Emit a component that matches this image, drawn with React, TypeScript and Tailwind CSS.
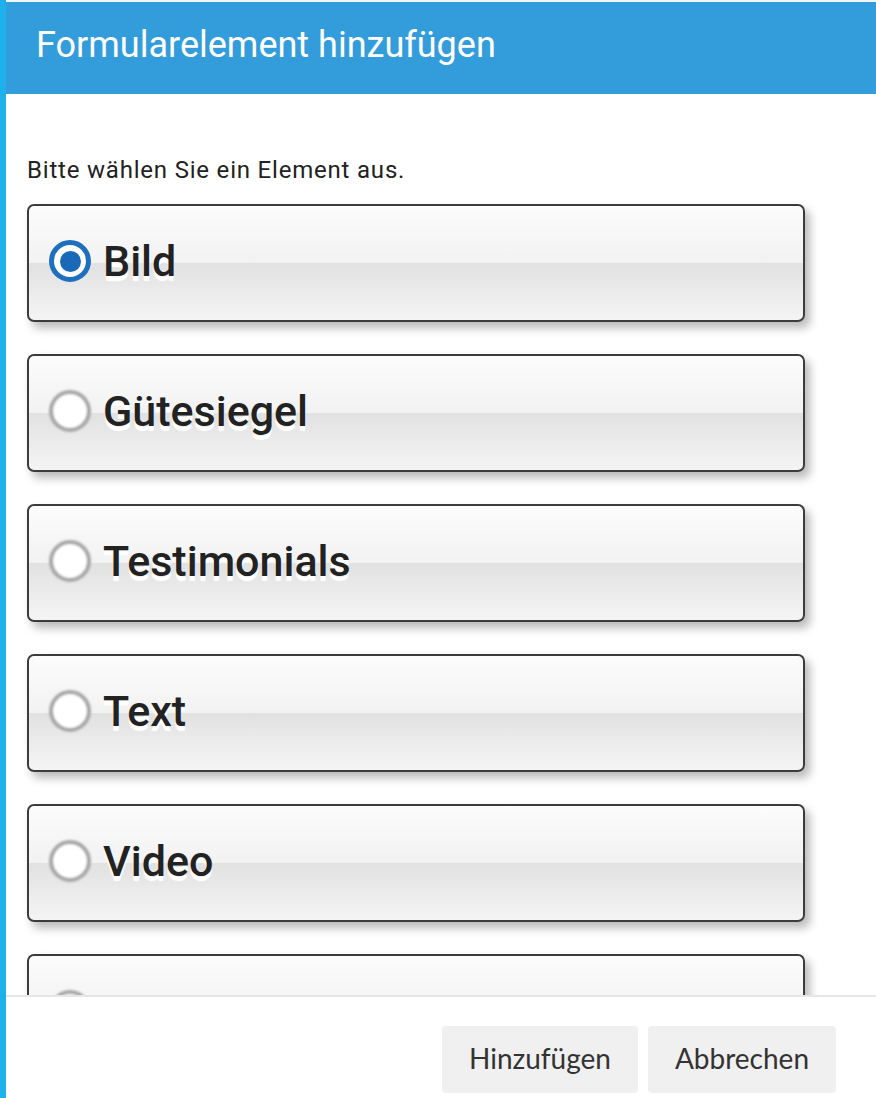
import React from 'react'

const items = [
  { label: 'Bild', checked: true },
  { label: 'Gütesiegel', checked: false },
  { label: 'Testimonials', checked: false },
  { label: 'Text', checked: false },
  { label: 'Video', checked: false },
  { label: '', checked: false },
]

const Radio = ({ checked }: { checked: boolean }) =>
  checked ? (
    <span className="flex h-[42px] w-[42px] shrink-0 items-center justify-center rounded-full border-[5px] border-[#1f6fbf] bg-white blur-[0.4px]">
      <span className="h-[21px] w-[21px] rounded-full bg-[#1a68b8]" />
    </span>
  ) : (
    <span className="h-[42px] w-[42px] shrink-0 rounded-full border-[4px] border-[#a8a8a8] bg-white blur-[0.8px]" />
  )

const Choice = ({ label, checked }: { label: string; checked: boolean }) => (
  <div className="flex h-[118px] shrink-0 items-center gap-[12px] rounded-[7px] border-2 border-[#3c3c3c] bg-[linear-gradient(to_bottom,#fcfcfc_0%,#f2f2f2_50%,#e1e1e1_50%,#ebebeb_75%,#f4f4f4_100%)] pb-[4px] pl-[20px] shadow-[5px_6px_10px_rgba(0,0,0,0.28)]">
    <Radio checked={checked} />
    {label && (
      <span className="font-['Roboto',sans-serif] text-[43px] font-medium leading-none text-[#222] [text-shadow:0_5px_1px_#fff]">
        {label}
      </span>
    )}
  </div>
)

const App = () => {
  return (
    <div className="flex h-[1098px] w-[876px] overflow-hidden bg-white">
      <div className="w-[6px] shrink-0 bg-[#1db0ea]" />

      <div className="flex min-w-0 flex-1 flex-col">
        <div className="h-[2px] shrink-0 bg-[#f2f6f9]" />
        <header className="flex h-[92px] shrink-0 items-center bg-[#339ddb] pb-[6px] pl-[30px]">
          <h1 className="font-['Roboto',sans-serif] text-[36px] font-normal text-white">
            Formularelement hinzufügen
          </h1>
        </header>

        <main className="flex min-h-0 flex-1 flex-col overflow-hidden pl-[21px] pr-[71px]">
          <p className="mt-[61px] mb-[19px] font-['Roboto',sans-serif] text-[24px] leading-[30px] tracking-[0.8px] text-[#222]">
            Bitte wählen Sie ein Element aus.
          </p>
          <div className="flex flex-col gap-[32px]">
            {items.map((it, i) => (
              <Choice key={i} label={it.label} checked={it.checked} />
            ))}
          </div>
        </main>

        <footer className="flex h-[103px] shrink-0 items-start justify-end gap-[10px] border-t-2 border-[#e6e6e6] pt-[29px] pr-[40px]">
          <button className="h-[67px] w-[196px] rounded-[4px] bg-[#f0f0f0] pb-[3px] font-['Lato',sans-serif] text-[28px] text-[#333]">
            Hinzufügen
          </button>
          <button className="h-[67px] w-[188px] rounded-[4px] bg-[#f0f0f0] pb-[3px] font-['Lato',sans-serif] text-[28px] text-[#333]">
            Abbrechen
          </button>
        </footer>
      </div>
    </div>
  )
}

export default App
